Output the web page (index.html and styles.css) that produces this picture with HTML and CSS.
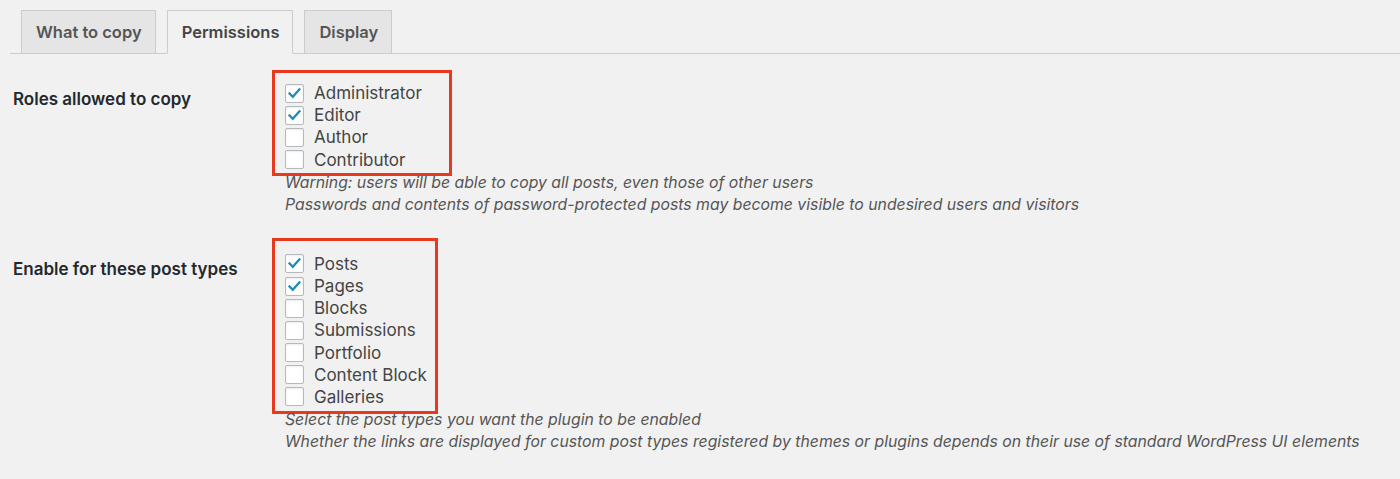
FILE: index.html
```html
<!DOCTYPE html>
<html lang="en">
<head>
  <meta charset="UTF-8">
  <title>Duplicate Post Options</title>
  <link rel="stylesheet" href="styles.css">
</head>
<body>
  <div class="tabs">
    <a class="tab">What to copy</a>
    <a class="tab tab-active">Permissions</a>
    <a class="tab">Display</a>
  </div>

  <div class="section sec-roles">
    <div class="th">Roles allowed to copy</div>
    <div class="td">
      <div class="mark mark-roles">
        <label class="row"><span class="cb on"></span>Administrator</label>
        <label class="row"><span class="cb on"></span>Editor</label>
        <label class="row"><span class="cb"></span>Author</label>
        <label class="row"><span class="cb"></span>Contributor</label>
      </div>
      <p class="desc">Warning: users will be able to copy all posts, even those of other users<br>
      Passwords and contents of password-protected posts may become visible to undesired users and visitors</p>
    </div>
  </div>

  <div class="section sec-types">
    <div class="th">Enable for these post types</div>
    <div class="td">
      <div class="mark mark-types">
        <label class="row"><span class="cb on"></span>Posts</label>
        <label class="row"><span class="cb on"></span>Pages</label>
        <label class="row"><span class="cb"></span>Blocks</label>
        <label class="row"><span class="cb"></span>Submissions</label>
        <label class="row"><span class="cb"></span>Portfolio</label>
        <label class="row"><span class="cb"></span>Content Block</label>
        <label class="row"><span class="cb"></span>Galleries</label>
      </div>
      <p class="desc">Select the post types you want the plugin to be enabled<br>
      Whether the links are displayed for custom post types registered by themes or plugins depends on their use of standard WordPress UI elements</p>
    </div>
  </div>
</body>
</html>
```

FILE: styles.css
```css
body {
  margin: 0;
  background: #f1f1f1;
  font-family: Inter, "Open Sans", sans-serif;
  color: #444;
  font-size: 17px;
}

.tabs {
  display: flex;
  gap: 11px;
  margin-left: 10px;
  padding: 10px 0 0 11px;
  border-bottom: 1px solid #ccc;
}

.tab {
  display: block;
  height: 42px;
  line-height: 42px;
  padding: 0 13px 0 14px;
  margin-bottom: -1px;
  border: 1px solid #ccc;
  background: #e5e5e5;
  color: #555;
  font-weight: 600;
  font-size: 16.5px;
}

.tab-active {
  background: #f1f1f1;
  border-bottom-color: #f1f1f1;
  color: #444;
}

.section {
  display: grid;
  grid-template-columns: 259px 1fr;
  padding-left: 13px;
  padding-top: 16px;
}

.sec-roles {
  padding-bottom: 6px;
}

.th {
  font-weight: 600;
  color: #23282d;
  line-height: 22px;
  padding-top: 18px;
}

.sec-types .th {
  padding-top: 20px;
}

.mark {
  box-sizing: border-box;
  border: 3px solid #e8391f;
  padding-left: 10px;
}

.mark-roles {
  width: 180px;
  padding-top: 9px;
  padding-bottom: 2px;
  margin-bottom: -4px;
}

.mark-types {
  width: 166px;
  padding-top: 12px;
  padding-bottom: 3px;
  margin-bottom: -5px;
}

.row {
  display: flex;
  align-items: center;
  height: 22.2px;
  gap: 10px;
}

.cb {
  box-sizing: border-box;
  width: 19px;
  height: 19px;
  border: 1px solid #b4b9be;
  border-radius: 2px;
  background: #fff;
  box-shadow: inset 0 1px 2px rgba(0,0,0,0.08);
}

.cb.on {
  background: #fff url("data:image/svg+xml,%3Csvg xmlns='http://www.w3.org/2000/svg' viewBox='0 0 19 19'%3E%3Cpath d='M4 9.5l3.6 3.6L15 4.8' fill='none' stroke='%231e8cbe' stroke-width='2.6' stroke-linecap='square'/%3E%3C/svg%3E") no-repeat center;
}

.desc {
  margin: 0;
  padding-left: 13px;
  font-style: italic;
  font-size: 15.8px;
  line-height: 22px;
  color: #555;
}
```
